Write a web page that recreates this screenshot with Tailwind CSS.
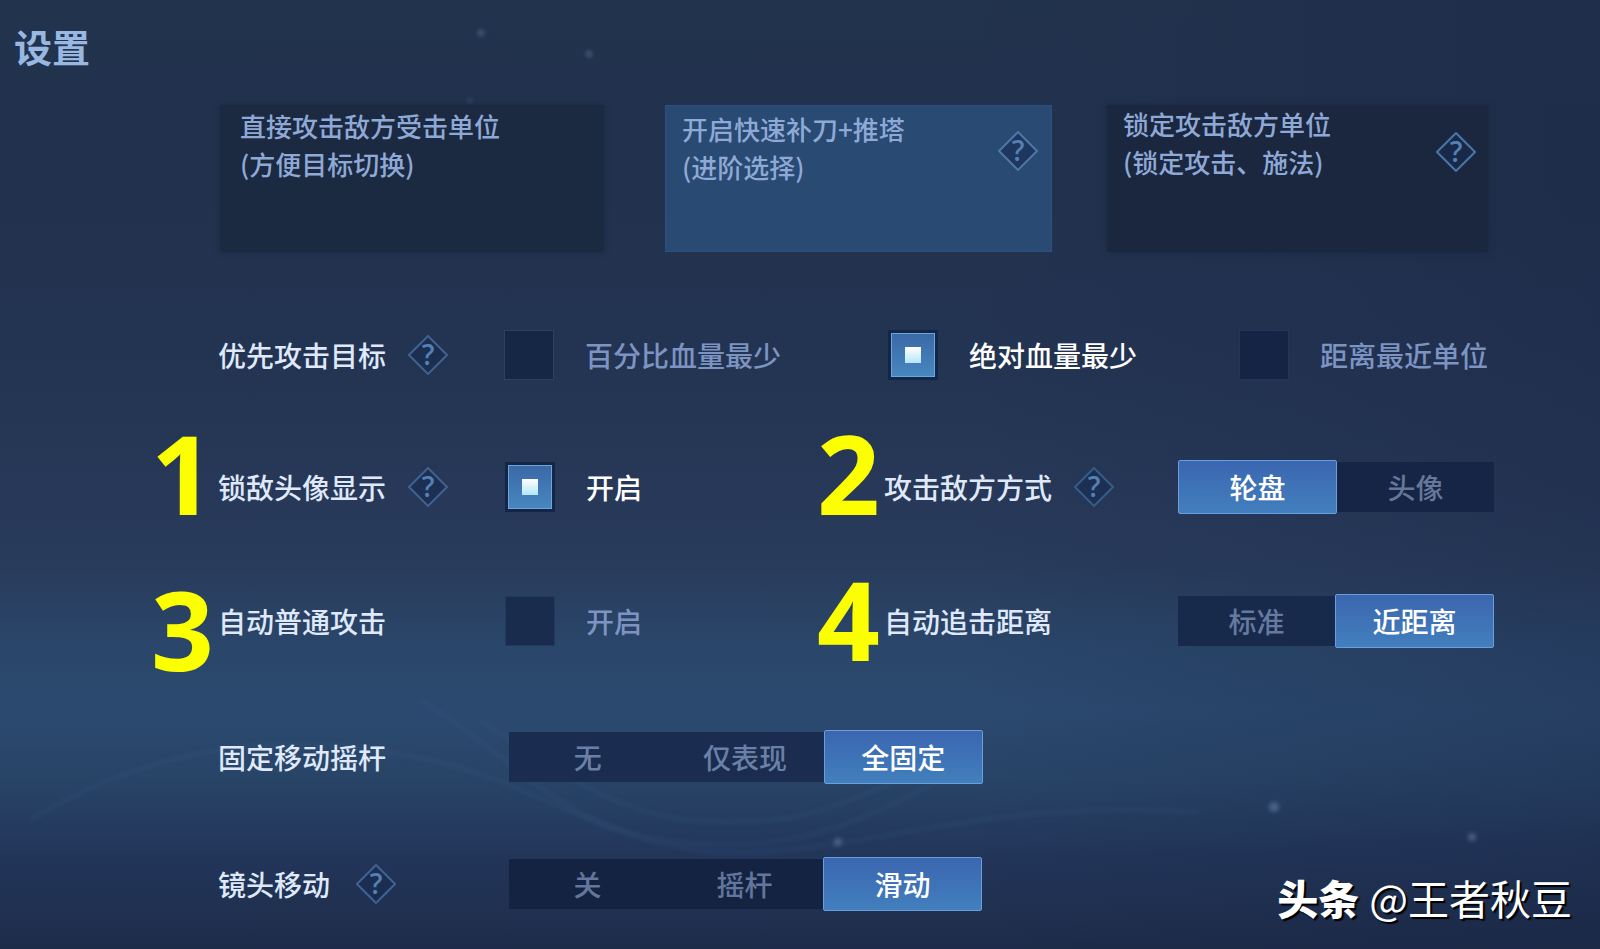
<!DOCTYPE html>
<html lang="zh-CN">
<head>
    <meta charset="UTF-8">
    <title>设置</title>
    <script src="https://cdn.jsdelivr.net/npm/@tailwindcss/browser@4"></script>
    <meta name="viewport" content="width=device-width, initial-scale=1.0">
</head>
<body class="relative min-h-screen overflow-x-hidden bg-[linear-gradient(to_bottom,#22334e_0%,#22324e_20%,#233452_36%,#273858_52%,#293c5c_60%,#2a466a_68%,#2b496f_75%,#284467_82%,#22365a_90%,#1e2c4a_100%)] font-['Noto_Sans_CJK_SC',sans-serif] font-medium text-[#dfe9fa]">
    <!-- background haze, ripples and sparks -->
    <div class="absolute inset-0 bg-[linear-gradient(to_right,transparent_60%,rgba(20,30,60,0.25)_100%)]"></div>
    <svg class="absolute inset-0 h-full w-full blur-[2px]" viewBox="0 0 1600 949" preserveAspectRatio="none" fill="none" aria-hidden="true">
        <g stroke="#5d82ad" stroke-opacity="0.1" stroke-width="4">
            <path d="M30 820C160 740 300 730 430 760S620 860 760 852S980 800 1200 812"/>
            <path d="M420 700C520 760 560 830 680 842S860 822 960 770"/>
            <path d="M480 720C600 800 640 820 720 822S830 808 900 780"/>
        </g>
        <g fill="#8fb0d8" fill-opacity="0.35">
            <circle cx="481" cy="33" r="3"/>
            <circle cx="589" cy="54" r="3"/>
            <circle cx="470" cy="101" r="2"/>
            <circle cx="532" cy="122" r="3"/>
            <circle cx="1274" cy="807" r="5"/>
            <circle cx="838" cy="842" r="4"/>
            <circle cx="1472" cy="837" r="4"/>
        </g>
    </svg>

    <!-- shared help icon -->
    <svg class="hidden" aria-hidden="true">
        <symbol id="help" viewBox="0 0 40 40">
            <path d="M20 1L39 20L20 39L1 20Z" fill="#182c50" fill-opacity="0.6" stroke="currentColor" stroke-width="2"/>
            <text x="20" y="30" text-anchor="middle" font-family="Open Sans, sans-serif" font-size="28" font-weight="600" fill="#5580b4">?</text>
        </symbol>
    </svg>

    <div class="relative">
        <header class="px-[14px] pt-[18px]">
            <h1 class="text-[38px] leading-[56px] font-bold text-[#98b8e2]">设置</h1>
        </header>

        <main class="pt-[31px] pr-[106px] pl-[218px]">
            <div class="mr-[6px] ml-[2px] grid grid-cols-[445fr_442fr_381fr] text-[26px] leading-[38px] text-[#8fa9d6]">
                <button class="mr-[61px] flex h-[147px] items-start bg-[#1b2941] pt-0.5 pl-[20px] text-left shadow-[0_0_6px_#1b2941]">
                    <span>直接攻击敌方受击单位<br>(方便目标切换)</span>
                </button>
                <div class="relative mr-[55px] h-[147px] border border-[#2c5180] bg-[#284a73]">
                    <button class="flex h-full w-full items-start pt-1 pl-4 text-left" aria-pressed="true">
                        <span>开启快速补刀+推塔<br>(进阶选择)</span>
                    </button>
                    <button class="absolute top-[25px] right-[13px] text-[#4f76a6]" aria-label="帮助"><svg class="size-10"><use href="#help"/></svg></button>
                </div>
                <div class="relative h-[147px] bg-[#1a273f] shadow-[0_0_6px_#1a273f]">
                    <button class="flex h-full w-full items-start pl-4 text-left">
                        <span>锁定攻击敌方单位<br>(锁定攻击、施法)</span>
                    </button>
                    <button class="absolute top-[27px] right-[12px] text-[#4a77a5]" aria-label="帮助"><svg class="size-10"><use href="#help"/></svg></button>
                </div>
            </div>

            <div class="mt-[76px] grid h-[54px] grid-cols-[286fr_384fr_351fr_255fr] items-center text-[28px] leading-10 whitespace-nowrap" role="radiogroup" aria-label="优先攻击目标">
                <div class="flex items-center gap-[22px]">
                    <span>优先攻击目标</span>
                    <button class="text-[#41618f]" aria-label="帮助"><svg class="size-10"><use href="#help"/></svg></button>
                </div>
                <label class="flex items-center gap-[31px] text-[#7d94c2]">
                    <input type="radio" name="target" class="size-[50px] appearance-none border border-[#2a4065] bg-[#162645]">
                    百分比血量最少
                </label>
                <label class="flex items-center gap-[31px] text-white">
                    <input type="radio" name="target" checked class="flex size-[50px] appearance-none items-center justify-center border-[3px] border-[#13264a] bg-linear-to-b from-[#3a68a6] to-[#4788c0] bg-clip-padding shadow-[inset_0_0_0_1px_#6ea5d8] before:size-4 before:bg-linear-to-b before:from-white before:to-[#b4e6fa]">
                    绝对血量最少
                </label>
                <label class="flex items-center gap-[31px] text-[#7d94c2]">
                    <input type="radio" name="target" class="size-[50px] appearance-none border border-[#233659] bg-[#152344]">
                    距离最近单位
                </label>
            </div>

            <div class="mt-[78px] grid h-[54px] grid-cols-[287fr_379fr_294fr_316fr] items-center text-[28px] leading-10 whitespace-nowrap">
                <div class="relative flex items-center gap-[22px]">
                    <span class="absolute right-full bottom-[-20px] mr-1 font-['Noto_Sans',sans-serif] text-[110px] leading-[110px] font-bold text-[#fcff00]">1</span>
                    <label for="lock-avatar">锁敌头像显示</label>
                    <button class="text-[#41618f]" aria-label="帮助"><svg class="size-10"><use href="#help"/></svg></button>
                </div>
                <label class="flex items-center gap-[31px] text-white">
                    <input id="lock-avatar" type="checkbox" checked class="flex size-[50px] appearance-none items-center justify-center border-[3px] border-[#13264a] bg-linear-to-b from-[#3a68a6] to-[#4788c0] bg-clip-padding shadow-[inset_0_0_0_1px_#6ea5d8] before:size-4 before:bg-linear-to-b before:from-white before:to-[#b4e6fa]">
                    开启
                </label>
                <div class="relative flex items-center gap-[22px]">
                    <span class="absolute right-full bottom-[-20px] mr-1 font-['Noto_Sans',sans-serif] text-[110px] leading-[110px] font-bold text-[#fcff00]">2</span>
                    <span>攻击敌方方式</span>
                    <button class="text-[#355c86]" aria-label="帮助"><svg class="size-10"><use href="#help"/></svg></button>
                </div>
                <div class="flex items-center" role="group" aria-label="攻击敌方方式">
                    <button class="h-[54px] flex-1 rounded-xs border border-[#6a9fdc] bg-linear-to-b from-[#3b66b0] to-[#427fbd] text-white" aria-pressed="true">轮盘</button>
                    <button class="h-[50px] flex-1 bg-[#162446] text-[#66779a]">头像</button>
                </div>
            </div>

            <div class="mt-[80px] grid h-[54px] grid-cols-[287fr_379fr_294fr_316fr] items-center text-[28px] leading-10 whitespace-nowrap">
                <div class="relative flex items-center">
                    <span class="absolute right-full bottom-[-42px] mr-1 font-['Noto_Sans',sans-serif] text-[110px] leading-[110px] font-bold text-[#fcff00]">3</span>
                    <label for="auto-attack">自动普通攻击</label>
                </div>
                <label class="flex items-center gap-[31px] text-[#7d94c2]">
                    <input id="auto-attack" type="checkbox" class="size-[50px] appearance-none border border-[#233a60] bg-[#1a2c4e]">
                    开启
                </label>
                <div class="relative flex items-center">
                    <span class="absolute right-full bottom-[-32px] mr-1 font-['Noto_Sans',sans-serif] text-[110px] leading-[110px] font-bold text-[#fcff00]">4</span>
                    <span>自动追击距离</span>
                </div>
                <div class="flex items-center" role="group" aria-label="自动追击距离">
                    <button class="h-[50px] flex-1 bg-[#182a4c] text-[#66799e]">标准</button>
                    <button class="h-[54px] flex-1 rounded-xs border border-[#6a9fdc] bg-linear-to-b from-[#3b66b0] to-[#427fbd] text-white" aria-pressed="true">近距离</button>
                </div>
            </div>

            <div class="mt-[82px] grid h-[54px] grid-cols-[291fr_474fr_511fr] items-center text-[28px] leading-10 whitespace-nowrap">
                <span>固定移动摇杆</span>
                <div class="flex items-center" role="group" aria-label="固定移动摇杆">
                    <button class="h-[50px] flex-1 bg-[#1a2c4f] text-[#6b80a6]">无</button>
                    <button class="h-[50px] flex-1 bg-[#1a2c4f] text-[#6b80a6]">仅表现</button>
                    <button class="h-[54px] flex-1 rounded-xs border border-[#6a9fdc] bg-linear-to-b from-[#3b66b0] to-[#427fbd] text-white" aria-pressed="true">全固定</button>
                </div>
            </div>

            <div class="mt-[73px] grid h-[54px] grid-cols-[291fr_473fr_512fr] items-center text-[28px] leading-10 whitespace-nowrap">
                <div class="flex items-center gap-[26px]">
                    <span>镜头移动</span>
                    <button class="text-[#41618f]" aria-label="帮助"><svg class="size-10"><use href="#help"/></svg></button>
                </div>
                <div class="flex items-center" role="group" aria-label="镜头移动">
                    <button class="h-[50px] flex-1 bg-[#152343] text-[#63769c]">关</button>
                    <button class="h-[50px] flex-1 bg-[#152343] text-[#63769c]">摇杆</button>
                    <button class="h-[54px] flex-1 rounded-xs border border-[#6a9fdc] bg-linear-to-b from-[#3b66b0] to-[#427fbd] text-white" aria-pressed="true">滑动</button>
                </div>
            </div>
        </main>
    </div>

    <!-- watermark -->
    <div class="absolute right-[28px] bottom-[22px] flex items-center gap-[10px] text-[41px] leading-[60px] whitespace-nowrap text-white [text-shadow:2px_2px_1px_#000]">
        <span class="font-black">头条</span>
        <span class="font-normal">@王者秋豆</span>
    </div>
</body>
</html>
